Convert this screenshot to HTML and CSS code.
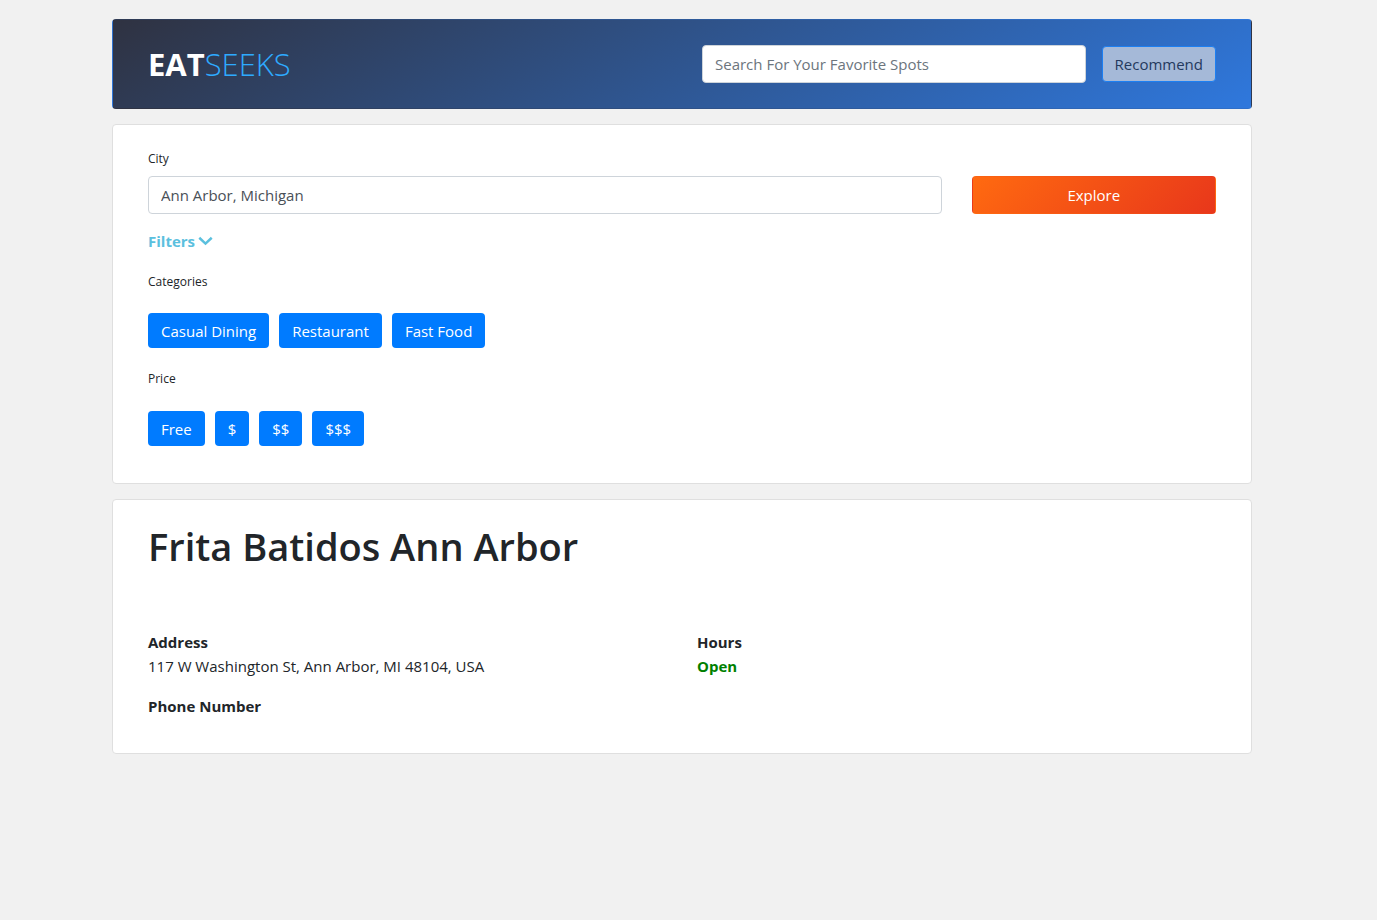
FILE: index.html
```html
<!DOCTYPE html>
<html lang="en">
<head>
<meta charset="utf-8">
<meta name="viewport" content="width=device-width, initial-scale=1">
<title>EatSeeks</title>
<link rel="stylesheet" href="styles.css">
</head>
<body>
<div class="container">
  <header class="panel topbar">
    <a class="brand" href="#"><strong>EAT</strong><span>SEEKS</span></a>
    <form class="search">
      <input class="field" type="search" placeholder="Search For Your Favorite Spots" aria-label="Search for your favorite spots">
      <button class="btn recommend" type="button">Recommend</button>
    </form>
  </header>
  <main>
    <form class="panel filters">
      <label class="caption" for="city">City</label>
      <div class="grid">
        <input class="field city" id="city" type="text" value="Ann Arbor, Michigan">
        <button class="btn explore" type="button">Explore</button>
      </div>
      <a class="toggle" href="#options">Filters
        <svg class="chevron" viewBox="0 0 14 10" aria-hidden="true"><path d="M1.200 1.500L7 7L12.800 1.500"/></svg>
      </a>
      <div class="options" id="options">
        <p class="caption">Categories</p>
        <div class="chips">
          <button class="btn chip" type="button">Casual Dining</button>
          <button class="btn chip" type="button">Restaurant</button>
          <button class="btn chip" type="button">Fast Food</button>
        </div>
        <p class="caption">Price</p>
        <div class="chips">
          <button class="btn chip" type="button">Free</button>
          <button class="btn chip" type="button">$</button>
          <button class="btn chip" type="button">$$</button>
          <button class="btn chip" type="button">$$$</button>
        </div>
      </div>
    </form>
    <section class="panel place">
      <h1>Frita Batidos Ann Arbor</h1>
      <div class="grid">
        <div class="half">
          <p><strong>Address</strong><br>117 W Washington St, Ann Arbor, MI 48104, USA</p>
          <p><strong>Phone Number</strong></p>
        </div>
        <div class="half">
          <p><strong>Hours</strong><br><strong class="open">Open</strong></p>
        </div>
      </div>
    </section>
  </main>
</div>
</body>
</html>
```
FILE: styles.css
```css
* { box-sizing: border-box; }
body {
  margin: 0;
  padding: 19px 13px 19px 0;
  background: #f1f1f1;
  color: #212529;
  font: 400 15px/24px "Open Sans", "Noto Sans", sans-serif;
}
.container { max-width: 1140px; margin: 0 auto; }
.panel {
  margin-bottom: 15px;
  padding: 20px 35px;
  border: 1px solid #dfdfdf;
  border-radius: 4px;
  background: #fff;
}
p { margin: 0 0 16px; }
strong { font-weight: 700; }

.topbar {
  display: flex;
  align-items: center;
  justify-content: space-between;
  gap: 30px;
  min-height: 90px;
  border-color: transparent;
  background: linear-gradient(150deg, #2f3241, #2f78dd);
}
.brand { color: #fff; font-size: 31px; line-height: 40px; text-decoration: none; }
.brand span { color: #2eaaff; font-weight: 300; }
.search { display: flex; align-items: center; gap: 16px; flex: 0 1 514px; }

.field {
  width: 100%;
  min-width: 0;
  height: 38px;
  padding: 6px 12px;
  border: 1px solid #ced4da;
  border-radius: 4px;
  background: #fff;
  color: #495057;
  font: inherit;
}
.field::placeholder { color: #6c757d; opacity: 1; }
.search .field { flex: 1; }
.btn {
  padding: 0 12px;
  border: 1px solid transparent;
  border-radius: 4px;
  color: #fff;
  font: inherit;
  cursor: pointer;
}
.recommend {
  height: 36px;
  border-color: #1c7ff2;
  background: #a5b9d8;
  color: #243a5e;
}

.grid { display: grid; grid-template-columns: repeat(12, 1fr); column-gap: 30px; }
.city { grid-column: span 9; }
.explore { grid-column: span 3; background: linear-gradient(135deg, #ff6a10, #e8371b); }
.half { grid-column: span 6; }

.filters { padding-bottom: 37px; }
.caption { display: block; margin: 0; font-size: 12px; color: #212529; }
.filters > .caption { padding: 2px 0 5px; }
.toggle {
  display: inline-flex;
  align-items: center;
  gap: 3px;
  margin: 15px 0 17px;
  color: #5bc0de;
  font-weight: 700;
  text-decoration: none;
}
.chevron { width: 15px; height: 11px; fill: none; stroke: currentColor; stroke-width: 2.300; }
.chips { display: flex; flex-wrap: wrap; gap: 10px; margin: 19px 0 19px; }
.chip { height: 35px; background: #007bff; }
.options .chips:last-child { margin: 20px 0 0; }

.place { padding-bottom: 19px; }
.place h1 { margin: 2px 0 60px; font-size: 38px; line-height: 48px; font-weight: 600; }
.open { color: #008000; }
```
